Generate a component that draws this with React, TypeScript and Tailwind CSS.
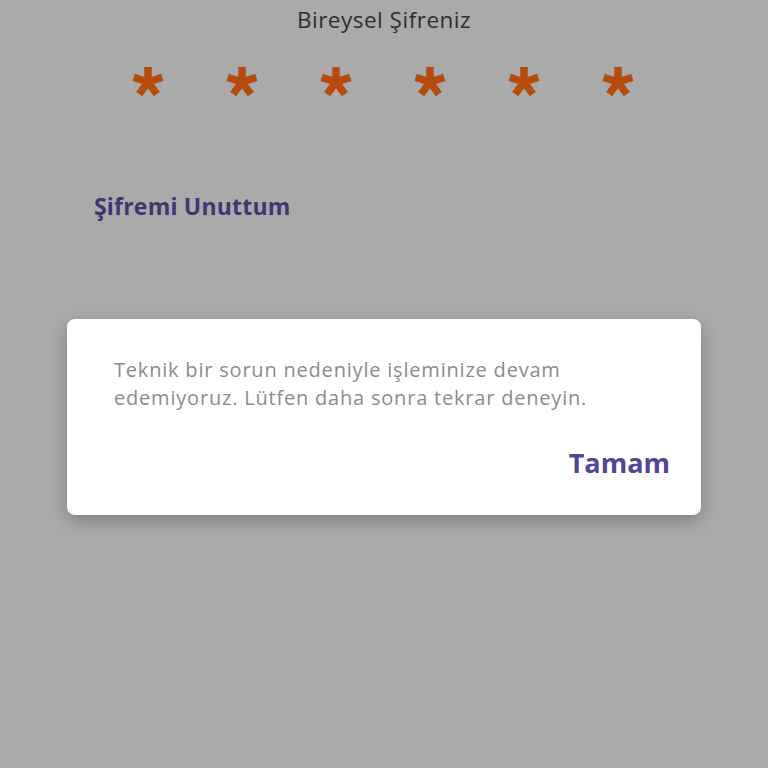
import React from 'react';

// Five-arm password mask star
function MaskStar() {
  const arms = [-90, -18, 54, 126, 198];
  return (
    <svg width="34" height="36" viewBox="-17 -18 34 36" className="block">
      {arms.map(a => {
        const r = (a * Math.PI) / 180;
        return (
          <line
            key={a}
            x1={0}
            y1={0}
            x2={Math.cos(r) * 15}
            y2={Math.sin(r) * 15}
            stroke="#b54b0c"
            strokeWidth={7.5}
            strokeLinecap="butt"
          />
        );
      })}
    </svg>
  );
}

export default function App() {
  return (
    <div
      className="relative w-[768px] h-[768px] bg-[#aaaaaa] overflow-hidden flex flex-col"
      style={{ fontFamily: '"Open Sans", "Noto Sans", sans-serif' }}
    >
      <div className="pt-[5px] text-center text-[22.5px] leading-[30px] tracking-[0.5px] text-[#2f2f2f]">
        Bireysel Şifreniz
      </div>

      <div className="mt-[29px] pl-[131px] flex gap-[60px]">
        {[0, 1, 2, 3, 4, 5].map(i => (
          <MaskStar key={i} />
        ))}
      </div>

      <div className="mt-[91px] pl-[94px] text-[23px] leading-[30px] font-bold text-[#3d3773] tracking-[0.2px]">
        Şifremi Unuttum
      </div>

      {/* Error dialog */}
      <div className="absolute left-[67px] top-[319px] w-[634px] h-[196px] bg-white rounded-[8px] shadow-[0_6px_18px_rgba(0,0,0,0.25)] flex flex-col">
        <p className="pt-[37px] px-[47px] text-[20px] leading-[28px] tracking-[0.8px] text-[#8c8c8c]">
          Teknik bir sorun nedeniyle işleminize devam
          <br />
          edemiyoruz. Lütfen daha sonra tekrar deneyin.
        </p>
        <div className="mt-[34px] pr-[31px] flex justify-end">
          <span className="text-[27px] leading-[34px] font-bold text-[#4f4694]">Tamam</span>
        </div>
      </div>
    </div>
  );
}
